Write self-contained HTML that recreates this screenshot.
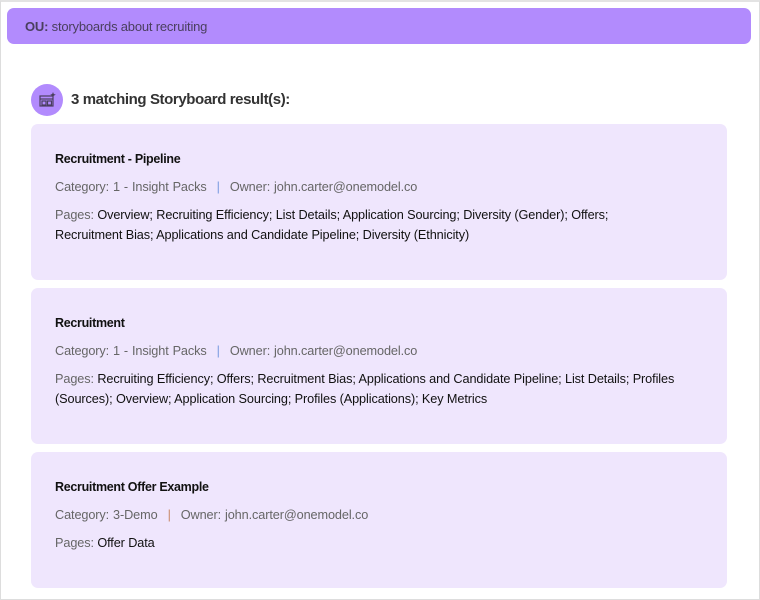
<!DOCTYPE html>
<html><head><style>
*{margin:0;padding:0;box-sizing:border-box}
body{width:760px;height:600px;background:#fff;font-family:"Liberation Sans",sans-serif;position:relative;overflow:hidden}
.frame{position:absolute;left:0;top:0;width:760px;height:600px;border:1px solid #ddd;border-top:2px solid #e3e3e3}
.bar{position:absolute;left:7px;top:8px;width:744px;height:36px;background:#b28bfd;border-radius:7px;font-size:13px;color:#4a3f5e;line-height:37px;padding-left:18px;letter-spacing:-0.2px}
.icon{position:absolute;left:31px;top:84px;width:32px;height:32px;border-radius:50%;background:#b28bfd}
.title{position:absolute;left:71px;top:91px;font-size:15px;color:#333;font-weight:bold;letter-spacing:-0.4px}
.card{position:absolute;left:31px;width:696px;background:#efe6fd;border-radius:7px;padding:28px 24px;font-size:12.7px;letter-spacing:-0.1px}
.card h3{font-size:12.5px;color:#111;font-weight:bold;margin-bottom:14px;letter-spacing:-0.3px}
.meta{color:#666;margin-bottom:11px;word-spacing:0.5px}
.sep{color:#7a9be0;margin:0 10px}
.pages{color:#111;line-height:20px}
.pages span{color:#666}
</style></head><body>
<div class="frame"></div>
<div class="bar"><b>OU:</b> storyboards about recruiting</div>
<div class="icon"><svg width="32" height="32" viewBox="0 0 32 32"><g fill="none" stroke="#4a3f5e" stroke-width="1.2"><rect x="9" y="12" width="13" height="10"/><line x1="9" y1="15" x2="22" y2="15"/><rect x="11" y="17" width="4" height="4"/><rect x="16.5" y="17" width="4" height="4"/></g><path d="M22 8 l0.8 2 2 0.8 -2 0.8 -0.8 2 -0.8 -2 -2 -0.8 2 -0.8z" fill="#4a3f5e"/></svg></div>
<div class="title">3 matching Storyboard result(s):</div>
<div class="card" style="top:124px;height:156px">
<h3>Recruitment - Pipeline</h3>
<div class="meta">Category: 1 - Insight Packs<span class="sep">|</span>Owner: john.carter@onemodel.co</div>
<div class="pages"><span>Pages:</span> Overview; Recruiting Efficiency; List Details; Application Sourcing; Diversity (Gender); Offers;<br>Recruitment Bias; Applications and Candidate Pipeline; Diversity (Ethnicity)</div>
</div>
<div class="card" style="top:288px;height:156px">
<h3>Recruitment</h3>
<div class="meta">Category: 1 - Insight Packs<span class="sep">|</span>Owner: john.carter@onemodel.co</div>
<div class="pages"><span>Pages:</span> Recruiting Efficiency; Offers; Recruitment Bias; Applications and Candidate Pipeline; List Details; Profiles<br>(Sources); Overview; Application Sourcing; Profiles (Applications); Key Metrics</div>
</div>
<div class="card" style="top:452px;height:136px">
<h3>Recruitment Offer Example</h3>
<div class="meta">Category: 3-Demo<span class="sep" style="color:#c98a6a">|</span>Owner: john.carter@onemodel.co</div>
<div class="pages"><span>Pages:</span> Offer Data</div>
</div>
</body></html>
